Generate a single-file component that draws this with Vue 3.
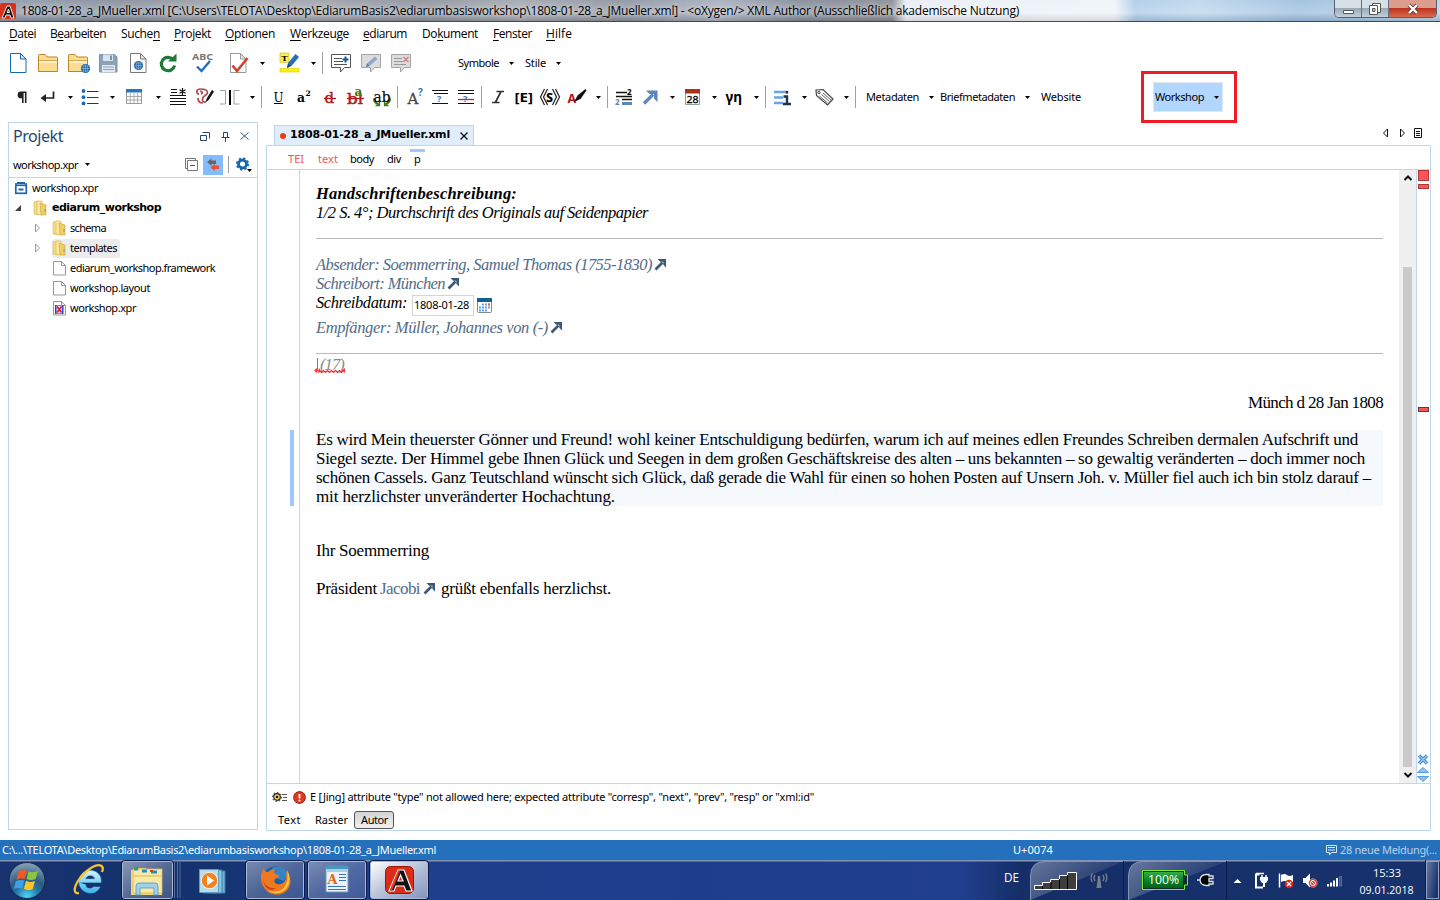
<script setup>
// Stretches or tightens a label so that it fills the given width.
const vFit = {
  mounted(el, { value }) {
    const n = el.textContent.length
    const natural = el.getBoundingClientRect().width
    el.style.letterSpacing = (value - natural) / n + 'px'
  },
}

const menus = [
  ['', 'D', 'atei', 27, 14],
  ['B', 'e', 'arbeiten', 56, 15],
  ['Suche', 'n', '', 39, 14],
  ['', 'P', 'rojekt', 37, 14],
  ['', 'O', 'ptionen', 50, 15],
  ['', 'W', 'erkzeuge', 59, 14],
  ['', 'e', 'diarum', 44, 15],
  ['Do', 'k', 'ument', 56, 15],
  ['', 'F', 'enster', 39, 14],
  ['', 'H', 'ilfe', 26, 0],
]

const caret = (x, y) => `<path d="M${x} ${y}h5l-2.500 3z" fill="#000"/>`
const sep = (x, y) => `<path d="M${x + 0.5} ${y}v22" stroke="#a0a0a0"/>`
const folder = (x) =>
  `<path d="M${x}.5 71.500V55.500q0-1 1-1h5.500l2 2.500h9.500q1 0 1 1v13.500z" fill="#fbdd94" stroke="#b98525"/><path d="M${x + 1} 60.500h18" stroke="#d9a84c"/><path d="M${x + 1} 61h18v2h-18z" fill="#fff0c4"/>`
const globe = (x, y) =>
  `<circle cx="${x}" cy="${y}" r="4.600" fill="#1d62a5"/><path d="M${x - 4} ${y}h8M${x} ${y - 4}v8M${x - 3} ${y - 2.5}h6M${x - 3} ${y + 2.5}h6M${x - 2.2} ${y - 3}v6M${x + 2.2} ${y - 3}v6" stroke="#9cc3e6" stroke-width=".6"/>`
const bubble = (x, on) =>
  `<path d="M${x}.5 54.500h19v13h-6l-4 4.500v-4.500h-9z" fill="${on ? '#fff' : '#dcdcdc'}" stroke="${on ? '#555' : '#a5a5a5'}"/>`
const doc = (x, c) => `<path d="M${x}.5 53.500h10l5.500 5.500v13.500h-15.500z" fill="#fff" stroke="${c}"/><path d="M${x + 10}.5 53.500v5.500h5.500z" fill="#dce6f0" stroke="${c}"/>`

// Each entry: left edge, width, then a drawing (page units) or a label.
const toolbar1 = {
  y: 51,
  h: 24,
  items: [
    [8, 24, doc(10, '#1767b0')],
    [36, 26, folder(38)],
    [66, 26, folder(68) + globe(85.5, 68.5)],
    [97, 24, '<path d="M99.500 54.500h15l2.500 2.500v15h-17.500z" fill="#8ba3ba" stroke="#7c94ab"/><path d="M103 54.500h10v6.500h-10z" fill="#dce4eb"/><path d="M110 55.500h2v4.500h-2z" fill="#7690a9"/><path d="M102 65h13v7h-13z" fill="#e3e9ee"/><path d="M103 67h11M103 69.500h11" stroke="#8ba3ba"/>'],
    [128, 22, doc(130, '#777') + globe(138.5, 65.5)],
    [156, 24, '<path d="M173 59.500a6.700 6.700 0 1 0 1.600 6" fill="none" stroke="#1f7a35" stroke-width="3.200"/><path d="M168 61.500h8.500v-8z" fill="#1f7a35"/>'],
    [190, 26, '<text x="192" y="60" textLength="21" lengthAdjust="spacingAndGlyphs" font-size="9" font-weight="700" fill="#777">ABC</text><path d="M197 66.500l4.500 4.500 8.500-10" fill="none" stroke="#2372b5" stroke-width="2.400"/>'],
    [228, 24, doc(230, '#999') + '<path d="M232.500 65.500l4.500 5.500 10.500-13" fill="none" stroke="#d2402b" stroke-width="2.600"/>'],
    [258, 10, caret(260, 62)],
    [277, 24, '<path d="M280 53h9v9.500h-9z" fill="#fff04a" stroke="#c8b820" stroke-width=".6"/><text x="281.600" y="61" font-family="DejaVu Serif" font-weight="700" font-size="8">T</text><path d="M280 68.500h19v3.500h-19z" fill="#fff200" stroke="#dccc00" stroke-width=".6"/><path d="M287 68l1-5 7.500-9 3.500 3-7.500 9z" fill="#2670b3"/><path d="M287 68l1-4 2.500 2z" fill="#143c66"/>'],
    [309, 10, caret(311, 62)],
    [321, 4, sep(322, 52)],
    [329, 24, bubble(331, true) + '<path d="M334 58.500h8M334 61.500h9M334 64.500h13" stroke="#555"/><path d="M342.500 59.500h6M345.500 56.500v6" stroke="#14579c" stroke-width="2"/>'],
    [359, 24, bubble(361) + '<path d="M366 67l1-3.500 8-7 2.500 2.500-8 7z" fill="#8eaac6"/><path d="M366 67l1-3.500 2.500 2.500z" fill="#5f7f9f"/>'],
    [389, 24, bubble(391) + '<path d="M394 58.500h8M394 61.500h9M394 64.500h12" stroke="#999"/><path d="M403.500 57l5 5M408.500 57l-5 5" stroke="#d08078" stroke-width="1.300"/>'],
    [458, 41, null, 'Symbole'],
    [507, 10, caret(509, 62)],
    [525, 21, null, 'Stile'],
    [554, 10, caret(556, 62)],
  ],
}

const serif = 'font-family="DejaVu Serif"'
const toolbar2 = {
  y: 85,
  h: 26,
  items: [
    [14, 16, '<path d="M26.500 91.500h-5.500a3.400 3.400 0 0 0 0 6.800h1v4.700h1.600V93h1.300v10h1.600z" fill="#222"/>'],
    [38, 20, '<path d="M53.500 91.500v6.500H43" fill="none" stroke="#222" stroke-width="1.700"/><path d="M40.500 98l5.500-4v8z" fill="#222"/>'],
    [66, 10, caret(68, 96)],
    [80, 22, '<path d="M87 91.500h11.500M87 97.500h11.500M87 103.500h11.500" stroke="#333" stroke-width="1.200"/><circle cx="83.500" cy="91" r="1.900" fill="#1c68b4"/><circle cx="83.500" cy="97.200" r="1.900" fill="#1c68b4"/><circle cx="83.500" cy="103.400" r="1.900" fill="#1c68b4"/>'],
    [108, 10, caret(110, 96)],
    [124, 22, '<path d="M126.500 89.500h15v14h-15z" fill="#fff" stroke="#999"/><path d="M126 89h16v3.500h-16z" fill="#2277bf"/><path d="M127 96.500h14M127 100h14M130.200 93v10.500M134 93v10.500M137.700 93v10.500" stroke="#aaa"/>'],
    [154, 10, caret(156, 96)],
    [168, 20, '<path d="M171 89.500h6M171 92.500h6M170 95.500h16M170 98.500h16M170 101.500h16M170 104.500h16" stroke="#111"/><path d="M182.500 88v7M179.500 89.700l6 3.500M185.500 89.700l-6 3.500" stroke="#111" stroke-width="1.200"/>'],
    [194, 22, '<path d="M199 94.500c-3.500-1.500-2.500-5.500 1-5.500s7.500.5 7.500 3.500-4.500 3-5 6c-.300 3 1.500 4 3 3.500M200 91.500c2.500-.5 3 2 1 2.500M198 98c0 3 2 5 5 5" fill="none" stroke="#b34b50" stroke-width="1.700"/><path d="M205 103l2-5 5-8 2 1.500-5 8z" fill="#111"/>'],
    [218, 24, '<path d="M220 90.500h5.500v13.500H220M239.500 90.500h-5.500v13.500h5.500" fill="none" stroke="#a0a0a0"/><path d="M230 90v15" stroke="#000" stroke-width="2"/>'],
    [248, 10, caret(250, 96)],
    [260, 4, sep(261, 86)],
    [270, 18, `<text x="273.500" y="101.500" ${serif} font-size="12" textLength="10" lengthAdjust="spacingAndGlyphs">U</text><path d="M274 103.500h9" stroke="#000"/>`],
    [295, 20, `<text x="297" y="101.500" ${serif} font-weight="700" font-size="12.500" textLength="8" lengthAdjust="spacingAndGlyphs">a</text><text x="305.500" y="95.500" ${serif} font-weight="700" font-size="7.500">2</text>`],
    [322, 16, `<text x="324.500" y="103" ${serif} font-size="15" fill="#b3171c" stroke="#b3171c" stroke-width=".4">d</text><path d="M324 98.500h12" stroke="#b3171c" stroke-width="1.300"/>`],
    [346, 20, `<text x="347" y="104" ${serif} font-size="15" fill="#b3171c" stroke="#b3171c" stroke-width=".5" textLength="16" lengthAdjust="spacingAndGlyphs">bl</text><path d="M347 98.500h17" stroke="#b3171c" stroke-width="1.300"/><text x="354.500" y="96" ${serif} font-weight="700" font-size="12" fill="#3b7a1b">a</text>`],
    [371, 22, `<path d="M374 98.500q0 4 5 6M390 98.500q0 4-5 6" fill="none" stroke="#3b7a1b" stroke-width="2.200"/><path d="M379.500 101v4.500h-4M384.500 101v4.500h4" fill="none" stroke="#3b7a1b" stroke-width="1.300"/><text x="373.500" y="101.500" ${serif} font-size="14" textLength="17" lengthAdjust="spacingAndGlyphs" stroke="#000" stroke-width=".2">ab</text>`],
    [396, 4, sep(397, 86)],
    [406, 20, `<text x="407.500" y="104" ${serif} font-size="15" fill="#444" stroke="#444" stroke-width=".3">A</text><text x="418" y="95.500" font-weight="700" font-size="10" fill="#3a76b4">?</text>`],
    [430, 22, '<path d="M432 90.500h16M434 93.500h14M432 103.500h16" stroke="#111" stroke-width="1.200"/><text x="437" y="101.500" font-weight="700" font-size="9" fill="#3a76b4">?</text>'],
    [456, 22, '<path d="M458 90.500h16M458 93.500h16M458 103.500h16" stroke="#111" stroke-width="1.200"/><text x="463" y="101.500" font-weight="700" font-size="9" fill="#3a76b4">?</text><path d="M458 99.500h16" stroke="#c22" stroke-width="1.300"/>'],
    [480, 4, sep(481, 86)],
    [490, 16, '<path d="M496.500 91.500h7.500M492 102.500h7.500M500.800 92l-5.500 10.500" stroke="#333" stroke-width="1.700"/>'],
    [512, 22, '<text x="514.500" y="101.500" font-weight="700" font-size="12" textLength="18.500" lengthAdjust="spacingAndGlyphs">[E]</text>'],
    [538, 24, '<path d="M544.500 89l-4 8 4 8M547.500 89l-4 8 4 8M552.500 89l4 8-4 8M555.500 89l4 8-4 8" fill="none" stroke="#222" stroke-width="1.200"/><text x="546.300" y="101.500" font-weight="700" font-size="12" stroke="#000" stroke-width=".3">S</text>'],
    [566, 22, '<text x="567.500" y="102.500" font-weight="700" font-size="12.500" fill="#b3171c">A</text><path d="M574 102l3.500-6.500 8-6.500 1 1.500-6 8.500z" fill="#111"/>'],
    [594, 10, caret(596, 96)],
    [606, 4, sep(607, 86)],
    [613, 22, '<path d="M616 92.500h11M616 96.500h16M622 99.500h10" stroke="#111" stroke-width="1.300"/><path d="M622 102h10v3h-10z" fill="#5c86bd"/><text x="627" y="94.500" font-weight="700" font-size="8">2</text><text x="615" y="105" font-weight="700" font-size="8" fill="#5c86bd">2</text>'],
    [641, 20, '<path d="M644 103.500l9-9" stroke="#5c86bd" stroke-width="3.200"/><path d="M646 90.500h11.500V102l-3.500-3.500V94h-4.500z" fill="#5c86bd"/>'],
    [668, 10, caret(670, 96)],
    [683, 20, '<path d="M685.500 92h14v12.500h-14z" fill="#fff" stroke="#999"/><path d="M685 89h15v4.500h-15z" fill="#a93316"/><text x="686.500" y="102.700" font-size="9.500" textLength="12" lengthAdjust="spacingAndGlyphs" stroke="#000" stroke-width=".3">28</text>'],
    [710, 10, caret(712, 96)],
    [724, 22, '<text x="725.500" y="101.500" font-size="14.500" font-weight="700" textLength="16.500" lengthAdjust="spacingAndGlyphs">γη</text>'],
    [752, 10, caret(754, 96)],
    [764, 4, sep(765, 86)],
    [772, 22, '<path d="M774 92h14M774 97.500h9M774 103h9" stroke="#6ba2e0" stroke-width="2.400"/><path d="M787 91v2.500M783.500 96.500h3.500v7M783 104h8" fill="none" stroke="#1b3350" stroke-width="2.400"/>'],
    [800, 10, caret(802, 96)],
    [813, 22, '<path d="M816 90l7-.5 10 9.500-5.500 6-11-9.500z" fill="#fff" stroke="#444" stroke-width="1.200"/><circle cx="819" cy="92.500" r="1.200" fill="none" stroke="#444"/><path d="M819.500 96l8 7M821.500 94.500l8 7M823 93l8 7" stroke="#555" stroke-width=".9"/>'],
    [842, 10, caret(844, 96)],
    [854, 4, sep(855, 86)],
    [866, 53, null, 'Metadaten'],
    [927, 10, caret(929, 96)],
    [940, 75, null, 'Briefmetadaten'],
    [1023, 10, caret(1025, 96)],
    [1041, 40, null, 'Website'],
  ],
}

const glass = (x, w, a) =>
  `<defs><linearGradient id="g${x}" x1="0" y1="0" x2="1" y2="1"><stop offset="0" stop-color="#fff" stop-opacity="${a}"/><stop offset=".5" stop-color="#fff" stop-opacity="${a * 0.55}"/><stop offset="1" stop-color="#fff" stop-opacity="${a * 0.35}"/></linearGradient></defs><rect x="${x}.5" y="861.500" width="${w}" height="37" rx="2" fill="url(#g${x})" stroke="#a9b8d3"/><rect x="${x - 0.5}" y="860.500" width="${w + 2}" height="39" rx="3" fill="none" stroke="#0c1c4a"/>`

const taskbar = {
  y: 860,
  h: 40,
  items: [
    [6, 42, '<defs><radialGradient id="orb" cx=".5" cy=".95" r=".95"><stop offset="0" stop-color="#4fd8f5"/><stop offset=".35" stop-color="#2576a6"/><stop offset=".55" stop-color="#2a5a84"/><stop offset="1" stop-color="#8da5b8"/></radialGradient></defs><circle cx="27" cy="880.500" r="18" fill="url(#orb)" stroke="#12264e"/><path d="M18.500 871.500q4.500-2.500 8.500-.8l-2.200 8.300q-4-1.500-8.500.8z" fill="#ee5a24"/><path d="M28.500 871.200q4.500 2 9.500-.2l-2.500 8.200q-5 1.800-9-.3z" fill="#8dc63f"/><path d="M15.800 881.200q4.500-2 8.500-.7l-2.200 8q-3.500-1.500-8.300.5z" fill="#3fa0e6"/><path d="M26 880.800q4.500 2.200 9 .3l-2.400 8.200q-4.500 1.800-8.700-.5z" fill="#fcc726"/>'],
    [70, 38, '<defs><linearGradient id="ie" x2="0" y2="1"><stop stop-color="#d5f5ff"/><stop offset="1" stop-color="#35b4ec"/></linearGradient></defs><path d="M79 882.500h22c1-7-4-12-10.500-12S79 875 79 881.500s5 11.500 11.500 11.500c4 0 7.500-2 9.500-6h-6.500c-3 3-8 1.500-8-2.500M85.500 879c1-4.500 8-5 9.500 0z" fill="url(#ie)" fill-rule="evenodd" stroke="#5cc5ef" stroke-width=".5"/><path d="M79 893c-5 1-6-4-1-12 7-11 19-18 23.500-15 1.500 1 1.500 3.500.5 6" fill="none" stroke="#f5c52b" stroke-width="2.300"/>'],
    [121, 60, glass(122, 50, 0.5) + '<path d="M174.500 862v36M177.500 862v36M180 862v36" stroke="#7485ad" opacity=".7"/><path d="M131 870h7l1-2h7v2h16v25h-31z" fill="#f1d77d"/><path d="M133 869h29v24h-29z" fill="#f9e9a4" stroke="#d9b955" stroke-width=".8"/><path d="M134 869h4M142 871h5M151 872h6" stroke-width="3" stroke="#278bc8"/><path d="M134 868.500h3" stroke="#31a847" stroke-width="2"/><path d="M150 871h3" stroke="#db3b27" stroke-width="2"/><path d="M133 876h28" stroke="#d9b955"/><path d="M136 895v-9q0-3 3-3h16q3 0 3 3v9h-4v-7h-14v7z" fill="#9fd0ec" stroke="#4b95c6" stroke-width=".8"/>'],
    [196, 32, '<path d="M207 871h18v22h-18z" fill="#6fb3d5" stroke="#3c7da8"/><path d="M203 870h19v23h-19z" fill="#8bc6e1" stroke="#3c7da8"/><path d="M199.500 869.500h19v23h-19z" fill="#b7ddec" stroke="#5a9dc2"/><circle cx="209.500" cy="880.500" r="8.200" fill="#f5821f" stroke="#fff" stroke-width=".8"/><path d="M207 875.500l7 5-7 5z" fill="#fff"/>'],
    [245, 60, glass(246, 57, 0.42) + '<circle cx="275.500" cy="880" r="13.500" fill="#1e5ea8"/><path d="M272 868c7-3 14 0 16.500 6l-5 7-9-4z" fill="#3584c7"/><path d="M264 868c0 3 2 4 4 4 2-2 5-3 7-2-2 2-1 4 3 5 2 1 0 3-3 4-2 3 1 6 5 5 6-1 7-6 6-13 5 6 6 12 2 18-4 6-14 8-21 2-7-6-8-16-3-23z" fill="#f0781e"/><path d="M287 870c4 7 3 14-1 19-5 5-13 6-19 1 7 3 15 2 18-4 3-5 3-11 2-16z" fill="#fbc63c"/><path d="M263 880c2 6 7 9 13 8-5 4-11 1-13-8z" fill="#c9391b"/>'],
    [307, 60, glass(308, 57, 0.42) + '<path d="M326 867h22v25h-22z" fill="#e9f2f8" stroke="#6d9cbe"/><path d="M326 865.500h22v4h-22z" fill="#4b97bd"/><path d="M326 869h22v3h-22z" fill="#a6d0e1"/><text x="327.500" y="883.500" font-family="Liberation Serif" font-weight="700" font-size="13" textLength="10" lengthAdjust="spacingAndGlyphs" fill="#e2691c">A</text><path d="M339 874.500h7M339 877.500h7M339 880.500h7M328 886.500h18M328 889.500h18" stroke="#3972b5"/>'],
    [369, 60, glass(370, 57, 1.25) + '<rect x="385.500" y="866.500" width="28" height="27" rx="5" fill="#dc2b16" stroke="#931a0c"/><path d="M389 891l9-21h6l8 21h-6l-2-5h-8l-2 5zM398 881h5l-2.500-6z" fill="#111" fill-rule="evenodd" stroke="#fff" stroke-width="1.200"/><path d="M391 890l8-19" stroke="#e43c23" stroke-width="2.200"/>'],
    [1000, 24, '<text x="1004" y="882" font-size="12.500" textLength="15" lengthAdjust="spacingAndGlyphs" fill="#fff">DE</text>'],
    [1029, 96, '<defs><linearGradient id="tray" x2="1" y2=".5"><stop stop-color="#fff" stop-opacity=".35"/><stop offset="1" stop-color="#fff" stop-opacity="0"/></linearGradient></defs><path d="M1030.500 900v-24q0-14.500 15-14.500h78" fill="url(#tray)" stroke="#8293b9"/><path d="M1123.500 861v39" stroke="#091c4b"/><path d="M1034.500 889.500v-4h8v-3h8v-3h9v-4h8v-3h9v17z" fill="#3d3d3d" stroke="#fff"/><path d="M1042.500 886v3M1051 882v7M1059.500 879v10M1067.500 875v14" stroke="#000"/><g fill="none" stroke="#7c818f" stroke-width="1.300"><path d="M1095 875q-2 3 0 6M1092.500 873.500q-3 4 0 8.500M1103 875q2 3 0 6M1105.500 873.500q3 4 0 8.500"/></g><path d="M1098 876h2l1.500 12h-5z" fill="#777c88"/>'],
    [1127, 101, '<path d="M1128.500 900v-24q0-14.500 15-14.500h83" fill="url(#tray)" stroke="#8293b9"/><path d="M1226.500 861v39" stroke="#091c4b"/><defs><linearGradient id="bat" x2="0" y2="1"><stop stop-color="#37aa4d"/><stop offset=".5" stop-color="#07872a"/><stop offset="1" stop-color="#045e1c"/></linearGradient></defs><path d="M1142.500 870.500h42v4.500h3v10h-3v4.500h-42z" fill="#102f24" stroke="#78ee27"/><path d="M1144 872h39v16h-39z" fill="url(#bat)"/><text x="1148" y="884" font-size="12" textLength="31" lengthAdjust="spacingAndGlyphs" fill="#fff">100%</text><path d="M1197 880h3q.5-5.500 6.500-5.500h2.500v1.500h4v2.500h-4v3h4v2.500h-4v1.500h-2.500q-6 0-6.500-5.500" fill="#000" stroke="#dfe4ee" stroke-width="1.300"/>'],
    [1230, 14, '<path d="M1233.500 883h8l-4-4z" fill="#fff"/>'],
    [1252, 18, '<path d="M1259.500 874.500h-3.500v13h7" fill="none" stroke="#fff" stroke-width="2"/><path d="M1256 873.500h8" stroke="#fff" stroke-width="1.500"/><path d="M1262 875v3M1266 875v3" stroke="#fff" stroke-width="1.500"/><path d="M1260 877h8v3l-2 3h-1v4h-2v-4h-1l-2-3z" fill="#fff"/>'],
    [1276, 20, '<path d="M1279.500 873.500v14" stroke="#fff" stroke-width="1.500"/><path d="M1281 875q4-2 6 0t6 0v7q-4 2-6 0t-6 0z" fill="#fff"/><circle cx="1289" cy="884" r="4.300" fill="#d5281b"/><path d="M1287 882l4 4M1291 882l-4 4" stroke="#fff" stroke-width="1.300"/>'],
    [1300, 20, '<path d="M1303 878h2.500l4.500-4.500v14l-4.500-4.500h-2.500z" fill="#fff"/><circle cx="1313" cy="883" r="4.300" fill="#d5281b" stroke="#fff" stroke-width=".4"/><circle cx="1313" cy="883" r="2.500" fill="none" stroke="#fff"/><path d="M1311 881l4 4" stroke="#fff"/>'],
    [1325, 18, '<path d="M1327 884h2v2.500h-2zM1330 882.500h2v4h-2zM1333 880.500h2v6h-2zM1336 878h2v8.500h-2z" fill="#fff"/><path d="M1339.500 876.500h2v9.500h-2z" fill="#25467f" stroke="#70809f" stroke-width=".8"/>'],
    [1352, 70, '<text x="1373" y="877" font-size="11.500" textLength="28" lengthAdjust="spacingAndGlyphs" fill="#fff">15:33</text><text x="1359.500" y="893.500" font-size="11.500" textLength="54" lengthAdjust="spacingAndGlyphs" fill="#fff">09.01.2018</text>'],
    [1424, 16, '<rect x="1426.500" y="861.500" width="12" height="37" fill="url(#tray)" stroke="#8fa0c2"/><path d="M1425.500 860v40" stroke="#0b1b47"/>'],
  ],
}

const strips = { toolbar1, toolbar2, taskbar }
const gapBefore = (items, i) => items[i][0] - (i ? items[i - 1][0] + items[i - 1][1] : 0)

const fold = (x, y) =>
  `<path d="M${x} ${y + 1}l5-1v14l-5-1z" fill="#f5dc80" stroke="#d8b554" stroke-width=".6"/><path d="M${x + 3} ${y}h5v14l-5-1z" fill="#fbeaa6" stroke="#d8b554" stroke-width=".6"/><path d="M${x + 6} ${y + 2}l6 2v10h-5z" fill="#efcf62" stroke="#c9a23c" stroke-width=".6"/><path d="M${x + 11} ${y + 8}v3" stroke="#5aa0cf"/>`
const page = '<path d="M1.500 1.500h8l4 4v9.500h-12z" fill="#fdfdfd" stroke="#979797"/><path d="M9.500 1.500v4h4" fill="none" stroke="#979797"/>'
const tree = [
  { pad: 5, arrow: '', icon: '<path d="M3 3h8" stroke="#1a66ae" stroke-width="2"/><rect x="1.800" y="5.300" width="10.500" height="8" fill="#fff" stroke="#1a66ae" stroke-width="1.700"/><path d="M4.500 9.500h5" stroke="#1a66ae" stroke-width="2"/><path d="M2 3v3M12 3v3" stroke="#1a66ae" stroke-width="1.600"/>', text: 'workshop.xpr', w: 66, root: true },
  { pad: 4, arrow: 'open', icon: fold(1, 1), text: 'ediarum_workshop', w: 109, bold: true },
  { pad: 24, arrow: 'shut', icon: fold(1, 1), text: 'schema', w: 36 },
  { pad: 24, arrow: 'shut', icon: fold(1, 1), text: 'templates', w: 47, sel: true },
  { pad: 24, arrow: 'none', icon: page, text: 'ediarum_workshop.framework', w: 145 },
  { pad: 24, arrow: 'none', icon: page, text: 'workshop.layout', w: 80 },
  { pad: 24, arrow: 'none', icon: page + '<path d="M3 5h8.500v9H3z" fill="#1745e8"/><path d="M4.500 5.500h5.500v8H4.500z" fill="#f6d5e0"/><path d="M5 6.500l4.500 6M9.500 6.500l-4.500 6" stroke="#e81c24" stroke-width="1.600"/>', text: 'workshop.xpr', w: 66 },
]

const para = [
  ['Es wird Mein theuerster Gönner und Freund! wohl keiner Entschuldigung bedürfen, warum ich auf meines edlen Freundes Schreiben dermalen Aufschrift und', 1042],
  ['Siegel sezte. Der Himmel gebe Ihnen Glück und Seegen in dem großen Geschäftskreise des alten – uns bekannten – so gewaltig veränderten – doch immer noch', 1049],
  ['schönen Cassels. Ganz Teutschland wünscht sich Glück, daß gerade die Wahl für einen so hohen Posten auf Unsern Joh. v. Müller fiel auch ich bin stolz darauf –', 1055],
  ['mit herzlichster unveränderter Hochachtung.', 299],
]
const linkArrow = '<path d="M1.500 11.500l7-7" stroke="#3c5878" stroke-width="2.600"/><path d="M3.500 1h8.500v8.500l-2.700-2.700V3.700H6.200z" fill="#3c5878"/>'
</script>

<template>
  <div class="screen">
    <header class="titlebar">
      <svg class="logo" width="16" height="18" viewBox="0 0 16 18">
        <rect x="0" y="1" width="16" height="16" rx="2" fill="#d8311c" />
        <path d="M2 16L7 4h3l4 12h-3l-1-3H6l-1 3zM7 10.500h2.500L8.500 7z" fill="#111" fill-rule="evenodd" stroke="#fff" stroke-width=".9" />
      </svg>
      <span v-fit="998" class="seg title">1808-01-28_a_JMueller.xml [C:\Users\TELOTA\Desktop\EdiarumBasis2\ediarumbasisworkshop\1808-01-28_a_JMueller.xml] - &lt;oXygen/&gt; XML Author (Ausschließlich akademische Nutzung)</span>
      <div class="winbtns">
        <div class="wb min"><svg width="14" height="16"><path d="M2.500 9.500h10v3h-10z" fill="#fff" stroke="#555" /></svg></div>
        <div class="wb max"><svg width="14" height="16"><path d="M4.500 2.500h8v9h-8z" fill="#fff" stroke="#555" /><path d="M1.500 4.500h8v9h-8z" fill="#fff" stroke="#555" /><path d="M4.500 7.500h2.500v3h-2.500z" fill="#bcd" stroke="#555" /></svg></div>
        <div class="wb close"><svg width="14" height="14"><path d="M3 3l8 8M11 3l-8 8" stroke="#5b3a3a" stroke-width="4" /><path d="M3 3l8 8M11 3l-8 8" stroke="#fff" stroke-width="2.400" /></svg></div>
      </div>
    </header>

    <nav class="menubar seg">
      <span v-for="m in menus" :key="m[0] + m[1] + m[2]" class="menu" :style="{ width: m[3] + 'px', marginRight: m[4] + 'px' }"><span v-fit="m[3]" class="t">{{ m[0] }}<u>{{ m[1] }}</u>{{ m[2] }}</span></span>
    </nav>

    <div v-for="name in ['toolbar1', 'toolbar2']" :key="name" class="strip" :class="name">
      <div v-for="(it, i) in strips[name].items" :key="i" class="slot" :style="{ width: it[1] + 'px', marginLeft: gapBefore(strips[name].items, i) + 'px' }">
        <svg v-if="it[2]" :width="it[1]" :height="strips[name].h" :viewBox="`${it[0]} ${strips[name].y} ${it[1]} ${strips[name].h}`" v-html="it[2]" />
        <span v-else v-fit="it[1]" class="t">{{ it[3] }}</span>
      </div>
      <div v-if="name === 'toolbar2'" class="highlight">
        <div class="workshop">
          <span v-fit="49" class="t">Workshop</span>
          <svg width="5" height="3"><path d="M0 0h5l-2.500 3z" /></svg>
        </div>
      </div>
    </div>

    <main class="main">
      <aside class="project">
        <div class="phead">
          <span v-fit="50" class="ptitle">Projekt</span>
          <svg width="52" height="14" fill="none" stroke="#24476f">
            <path d="M3.500 2.500h7v6M1.500 5.500h6v5h-6z" />
            <path d="M24.500 2.500h4v5h-4zM22.500 7.500h8M26.500 8v4" />
            <path d="M41.500 2.500l8 7M49.500 2.500l-8 7" stroke-width=".9" />
          </svg>
        </div>
        <div class="pbar">
          <span v-fit="65" class="t">workshop.xpr</span>
          <svg class="pcaret" width="5" height="3"><path d="M0 0h5l-2.500 3z" /></svg>
          <svg class="collapse" width="14" height="14" fill="none" stroke="#777"><path d="M2.500 10.500h-2V.5h10v2" /><path d="M2.500 2.500h10v10h-10z" /><path d="M5 7.500h5" stroke="#1767b0" /></svg>
          <span class="linked"><svg width="20" height="20"><path d="M4 7l4.500-3.500v2H13v3.500H8.500v2z" fill="#666" /><path d="M16.500 13.500l-4.500 3.500v-2h-4v-3.500h4v-2z" fill="#e25534" transform="matrix(-1 0 0 1 24 -1)" /></svg></span>
          <i class="pline"></i>
          <svg width="17" height="16"><circle cx="6.500" cy="7" r="4" fill="none" stroke="#1767b0" stroke-width="2.800" /><circle cx="6.500" cy="7" r="5.600" fill="none" stroke="#1767b0" stroke-width="2" stroke-dasharray="2.200 2.200" /><path d="M11 12h5l-2.500 3z" /></svg>
        </div>
        <div class="tree">
          <div v-for="(n, i) in tree" :key="i" class="node" :style="{ paddingLeft: n.pad + 'px' }">
            <svg v-if="!n.root" class="tw" width="20" height="16">
              <path v-if="n.arrow === 'open'" d="M8 5v6H2z" fill="#404040" />
              <path v-if="n.arrow === 'shut'" d="M2.500 4l4 4-4 4z" fill="#fff" stroke="#999" />
            </svg>
            <span class="entry" :class="{ sel: n.sel, root: n.root }">
              <svg width="15" height="16" v-html="n.icon" />
              <span v-fit="n.w" class="t" :class="{ bold: n.bold }">{{ n.text }}</span>
            </span>
          </div>
        </div>
      </aside>

      <section class="editor">
        <div class="tabs">
          <div class="tab">
            <i class="dot"></i>
            <span v-fit="160" class="t bold">1808-01-28_a_JMueller.xml</span>
            <svg width="10" height="10"><path d="M1.500 1.500l7 7M8.500 1.500l-7 7" stroke="#111" stroke-width="1.400" /></svg>
          </div>
          <svg class="tabnav" width="44" height="12" fill="#fff" stroke="#111">
            <path d="M5.500 2v8l-4-4zM18.500 2v8l4-4z" />
            <path d="M32.500 1.500h7v9h-7zM34 4.500h4M34 6.500h4M34 8.500h4" />
          </svg>
        </div>
        <div class="panel">
          <div class="crumbs">
            <span v-fit="16" class="t red">TEI</span>
            <span v-fit="20" class="t red">text</span>
            <span v-fit="24" class="t">body</span>
            <span v-fit="14" class="t">div</span>
            <span class="cur"><span v-fit="7" class="t">p</span></span>
          </div>
          <div class="work">
            <div class="gutter"><i></i></div>
            <article class="doc">
              <p class="it"><b v-fit="201" class="t">Handschriftenbeschreibung:</b></p>
              <p class="it"><span v-fit="332" class="t">1/2 S. 4°; Durchschrift des Originals auf Seidenpapier</span></p>
              <hr class="r1" />
              <p class="it link"><span v-fit="336" class="t">Absender: Soemmerring, Samuel Thomas (1755-1830)</span><svg width="13" height="13" v-html="linkArrow" /></p>
              <p class="it link"><span v-fit="129" class="t">Schreibort: München</span><svg width="13" height="13" v-html="linkArrow" /></p>
              <p class="it date">
                <span v-fit="91" class="t lab">Schreibdatum:</span>
                <span class="input"><span v-fit="55" class="t">1808-01-28</span></span>
                <svg width="16" height="16"><rect x=".5" y=".5" width="14" height="14" rx="1" fill="#fff" stroke="#888" /><path d="M0 0h15v4H0z" fill="#13618f" /><path d="M5 6.500h8M2 9.500h11M2 12.500h8" stroke="#5aa2ef" stroke-width="2" stroke-dasharray="2 1" /><path d="M11 6.500h2" stroke="#f26a1b" stroke-width="2" /></svg>
              </p>
              <p class="it link"><span v-fit="232" class="t">Empfänger: Müller, Johannes von (-)</span><svg width="13" height="13" v-html="linkArrow" /></p>
              <hr class="r2" />
              <p class="it note"><i class="cursor"></i><span v-fit="24" class="t">(17)</span>
                <svg class="wave" width="32" height="7"><path d="M4 5.500l1.500-2 2 2 2-2 2 2 2-2 2 2 2-2 2 2 2-2 2 2 2-2 2 2 2-2" fill="none" stroke="#f22" stroke-width="1.200" /><path d="M0 3.500l3-2.500v5zM6 1v5l-2-2.500zM31 1v5l-3-2.500z" fill="#f33" /></svg>
              </p>
              <p class="right"><span v-fit="135" class="t">Münch d 28 Jan 1808</span></p>
              <div class="para">
                <p v-for="l in para" :key="l[1]"><span v-fit="l[1]" class="t">{{ l[0] }}</span></p>
              </div>
              <p class="sign"><span v-fit="113" class="t">Ihr Soemmerring</span></p>
              <p class="post"><span v-fit="61" class="t">Präsident</span><span v-fit="40" class="t jac">Jacobi</span><svg width="13" height="13" v-html="linkArrow" /><span v-fit="170" class="t tail">grüßt ebenfalls herzlichst.</span></p>
            </article>
            <div class="scroll">
              <svg width="10" height="8"><path d="M1.500 6L5 2.500 8.500 6" fill="none" stroke="#111" stroke-width="2" /></svg>
              <i></i>
              <svg width="10" height="8"><path d="M1.500 2L5 5.500 8.500 2" fill="none" stroke="#111" stroke-width="2" /></svg>
            </div>
            <div class="marks">
              <i class="big"></i><i class="m2"></i><i class="m3"></i>
              <svg width="12" height="30">
                <path d="M2 2.500l8 8M10 2.500l-8 8" stroke="#3a86cd" stroke-width="3.200" /><path d="M2 2.500l8 8M10 2.500l-8 8" stroke="#8fc2f2" stroke-width="1.600" />
                <path d="M.5 19.500h11l-5.500-5zM.5 23.500h11l-5.500 5z" fill="#8fc2f2" stroke="#3a8bdd" stroke-width=".8" />
              </svg>
            </div>
          </div>
          <div class="message">
            <svg width="15" height="12"><circle cx="5" cy="6" r="3.300" fill="#f7cf55" stroke="#222" stroke-width="1.200" /><circle cx="5" cy="6" r="4.600" fill="none" stroke="#222" stroke-dasharray="1.500 2" /><circle cx="5" cy="6" r="1.200" /><path d="M10 3.500h5M11 6.500h4M10 9.500h5" stroke="#555" /></svg>
            <svg width="13" height="13"><circle cx="6.500" cy="6.500" r="5.900" fill="#dd3a1c" stroke="#9d2410" /><path d="M6.500 3v4.500M6.500 8.800v1.700" stroke="#fff" stroke-width="1.800" /></svg>
            <span v-fit="504" class="t">E [Jing] attribute "type" not allowed here; expected attribute "corresp", "next", "prev", "resp" or "xml:id"</span>
          </div>
          <div class="modes">
            <span v-fit="23" class="t">Text</span>
            <span v-fit="33" class="t">Raster</span>
            <span class="autor"><span v-fit="27" class="t">Autor</span></span>
          </div>
        </div>
      </section>
    </main>

    <footer class="status">
      <span class="path"><span v-fit="434" class="t">C:\...\TELOTA\Desktop\EdiarumBasis2\ediarumbasisworkshop\1808-01-28_a_JMueller.xml</span></span>
      <span class="code"><span v-fit="40" class="t">U+0074</span></span>
      <svg width="13" height="13" fill="none" stroke="#dbe8f5"><path d="M1.500 1.500h10v7h-5l-2 2.500v-2.500h-3zM3 3.500h7M3 6h7" /></svg>
      <span class="news"><span v-fit="97" class="t">28 neue Meldung(...</span></span>
    </footer>

    <div class="strip taskbar seg">
      <div v-for="(it, i) in taskbar.items" :key="i" class="slot" :style="{ width: it[1] + 'px', marginLeft: gapBefore(taskbar.items, i) + 'px' }">
        <svg :width="it[1]" :height="taskbar.h" :viewBox="`${it[0]} ${taskbar.y} ${it[1]} ${taskbar.h}`" v-html="it[2]" />
      </div>
    </div>
  </div>
</template>

<style>
body { margin: 0; overflow: hidden; }
</style>

<style scoped>
.screen { width: 1440px; height: 900px; overflow: hidden; display: flex; flex-direction: column; background: #fff; font: 11px/14px "Noto Sans", sans-serif; color: #000; }
.screen * { box-sizing: border-box; }
svg { display: block; flex: none; }
p { margin: 0; }
.t { display: inline-block; white-space: pre; flex: none; }
.seg { font-family: "Open Sans", sans-serif; }
.bold { font-family: "DejaVu Sans", sans-serif; font-weight: 700; font-size: 11px; margin-top: -1px; }

.titlebar { height: 22px; flex: none; display: flex; align-items: center; border-bottom: 1px solid #45494f; background: linear-gradient(rgba(255,255,255,.12), rgba(255,255,255,.28) 60%, rgba(0,0,0,.1)), linear-gradient(90deg, #8a96a9 0, #7f8795 120px, #a2a6ac 260px, #858b97 420px, #9da3ab 520px, #858d9a 620px, #a3aabb 720px, #7c8492 800px, #83868e 892px, #e6edf4 906px, #edf3f8 1115px, #a9c9e7 1135px, #b9d4ec 1200px, #98bcdd 1300px, #b3cce3 1440px); }
.logo { margin-top: 1px; }
.title { display: inline-block; white-space: nowrap; font-size: 12px; margin-left: 5px; flex: none; text-shadow: 0 0 5px rgba(255,255,255,.8); }
.winbtns { margin-left: auto; margin-right: 3px; align-self: flex-start; display: flex; height: 18px; border: 1px solid #555f6b; border-top: 0; border-radius: 0 0 5px 5px; overflow: hidden; }
.wb { display: flex; align-items: center; justify-content: center; background: linear-gradient(#d7dfe7 45%, #9aa9b8 50%, #c2d0dc); }
.min { width: 27px; border-right: 1px solid #66717d; }
.max { width: 27px; border-right: 1px solid #66717d; }
.close { width: 47px; background: linear-gradient(#dd9d8e 45%, #bd3520 50%, #d86a49); }

.menubar { height: 24px; flex: none; display: flex; align-items: center; padding-left: 9px; font-size: 12px; }
.menu { flex: none; }
.menu u { text-underline-offset: 2px; }

.strip { display: flex; align-items: center; flex: none; }
.strip :deep(text) { font-family: "Noto Sans", sans-serif; }
.strip :deep(text[font-family]) { font-family: "DejaVu Serif", serif; }
.slot { flex: none; display: flex; }
.toolbar1 { height: 34px; }
.toolbar1 .slot { align-items: center; height: 24px; }
.toolbar2 { height: 42px; align-items: flex-start; padding: 5px 0 8px; }
.toolbar2 .slot { height: 26px; align-items: center; }
.toolbar2 .slot .t { margin-top: -2px; }
.highlight { margin: -14px 0 0 60px; width: 96px; height: 52px; flex: none; border: 3px solid #ee1c25; padding: 8px 0 0 9px; }
.workshop { width: 70px; height: 30px; background: #b1d6ff; border: 1px solid #e2e8ee; display: flex; align-items: center; padding-left: 1px; gap: 10px; }

.main { height: 718px; flex: none; display: flex; padding-left: 8px; }
.project { width: 250px; height: 708px; border: 1px solid #bfd7ed; }
.phead { height: 28px; display: flex; align-items: center; padding: 0 6px 0 4px; justify-content: space-between; }
.ptitle { display: inline-block; font-size: 16px; line-height: 20px; margin-top: -2px; color: #24496f; white-space: nowrap; }
.pbar { height: 27px; display: flex; align-items: center; padding: 1px 0 0 4px; border-bottom: 1px solid #bfd7ed; }
.pcaret { margin-left: 7px; }
.collapse { margin-left: 95px; }
.linked { margin-left: 4px; width: 20px; height: 20px; background: #83bcff; }
.pline { width: 1px; height: 17px; background: #999; margin: 0 7px 0 5px; }
.node { height: 20px; display: flex; align-items: center; }
.entry { display: flex; align-items: center; height: 19px; gap: 4px; border-radius: 3px; padding-right: 3px; }
.entry.root { gap: 3px; }
.entry.sel { background: #ececec; }
.tw { flex: none; }
.node:nth-child(n+3) .entry { margin-left: -1px; gap: 3px; }

.editor { width: 1165px; margin-left: 8px; display: flex; flex-direction: column; height: 709px; }
.tabs { height: 23px; display: flex; justify-content: space-between; align-items: flex-end; padding: 0 8px; }
.tab { width: 200px; height: 20px; background: #e0eefc; border: 1px solid #bfd7ed; border-bottom: 0; display: flex; align-items: center; padding-left: 5px; }
.dot { width: 6px; height: 6px; border-radius: 50%; background: #f03c10; margin-right: 4px; }
.tab svg { margin-left: 9px; }
.tabnav { margin: 0 -3px 6px 0; }
.panel { height: 686px; border: 1px solid #bfd7ed; display: flex; flex-direction: column; }
.crumbs { height: 24px; flex: none; border-bottom: 1px solid #bfd7ed; display: flex; padding: 6px 0 0 21px; gap: 13px; }
.red { color: #f25555; }
.red + .red { margin: 0 -1px 0 1px; }
.cur { margin: -3px 0 0 -4px; padding: 0 4px; height: 20px; border-top: 3px solid #a0c8fc; }
.work { height: 614px; flex: none; display: flex; border-bottom: 1px solid #bfd7ed; }
.gutter { width: 33px; border-right: 1px solid #bfd7ed; padding: 260px 0 0 23px; }
.gutter i { display: block; width: 4px; height: 76px; background: #a0c8fc; }
.doc { width: 1099px; padding: 14px 16px 0; font: 17px/19px "Liberation Serif", serif; }
.doc p { height: 19px; display: flex; align-items: center; }
.doc .it { font-style: italic; font-size: 16.500px; }
.link, .jac { color: #526c89; }
.link svg { margin-left: 2px; }
hr { border: 0; height: 1px; background: #b9b9b9; margin: 0; }
.r1 { margin: 16px 0 16px; }
.r2 { margin: 16px 0 1px; }
.doc .date { height: 25px; align-items: flex-start; }
.input { width: 62px; height: 21px; margin: 2px 3px 0 5px; border: 1px solid #d5d5d5; padding: 2px 0 0 1px; font: 11px/14px "Noto Sans", sans-serif; }
.date svg { margin-top: 5px; }
.doc .note { position: relative; color: #8a8a8a; }
.cursor { width: 1px; height: 13px; background: #19a5b5; margin: 0 2px 0 1px; }
.wave { position: absolute; left: -2px; top: 12px; }
.doc .right { justify-content: flex-end; margin-top: 19px; }
.para { margin-top: 18px; background: #f5f9fd; height: 76px; }
.doc .sign { margin-top: 35px; }
.doc .post { margin-top: 19px; }
.jac { margin: 0 3px; }
.tail { margin-left: 5px; }
.scroll { width: 17px; background: #f0f0f0; display: flex; flex-direction: column; align-items: center; padding: 4px 0; }
.scroll i { width: 9px; height: 500px; background: #cacaca; margin: 85px 0 auto; }
.marks { width: 14px; border-left: 1px solid #bfd7ed; display: flex; flex-direction: column; padding-left: 1px; }
.marks i { width: 11px; background: #fd5555; border: 1px solid #b23636; flex: none; }
.big { height: 11px; }
.m2 { height: 5px; margin-top: 3px; }
.marks .m3 { height: 5px; margin-top: 218px; border-color: #444; }
.marks svg { margin: 341px 0 0 -1px; }
.message { height: 26px; flex: none; display: flex; align-items: center; padding-left: 5px; }
.message svg + svg { margin: 0 4px 0 6px; }
.modes { display: flex; align-items: center; padding-left: 11px; height: 19px; }
.modes .t + .t { margin-left: 14px; }
.autor { margin-left: 6px; width: 40px; height: 18px; border: 1px solid #555; border-radius: 3px; background: linear-gradient(#d4d4d4, #f0f0f0); padding: 1px 0 0 6px; }

.status { height: 20px; flex: none; background: #2570bc; color: #fff; display: flex; align-items: center; padding-left: 2px; }
.path { width: 1011px; }
.code { width: 312px; }
.news { color: #b5d0ea; margin-left: 2px; }
.taskbar { height: 40px; background: linear-gradient(#8294b5 1px, transparent 2px), linear-gradient(90deg, #18336f 0, #14326d 200px, #203f8c 380px, #1c3e8c 700px, #213f8e 960px, #152e68 1020px, #17326c); }
.taskbar :deep(text:not([font-family])) { font-family: "Open Sans", sans-serif; }
</style>
